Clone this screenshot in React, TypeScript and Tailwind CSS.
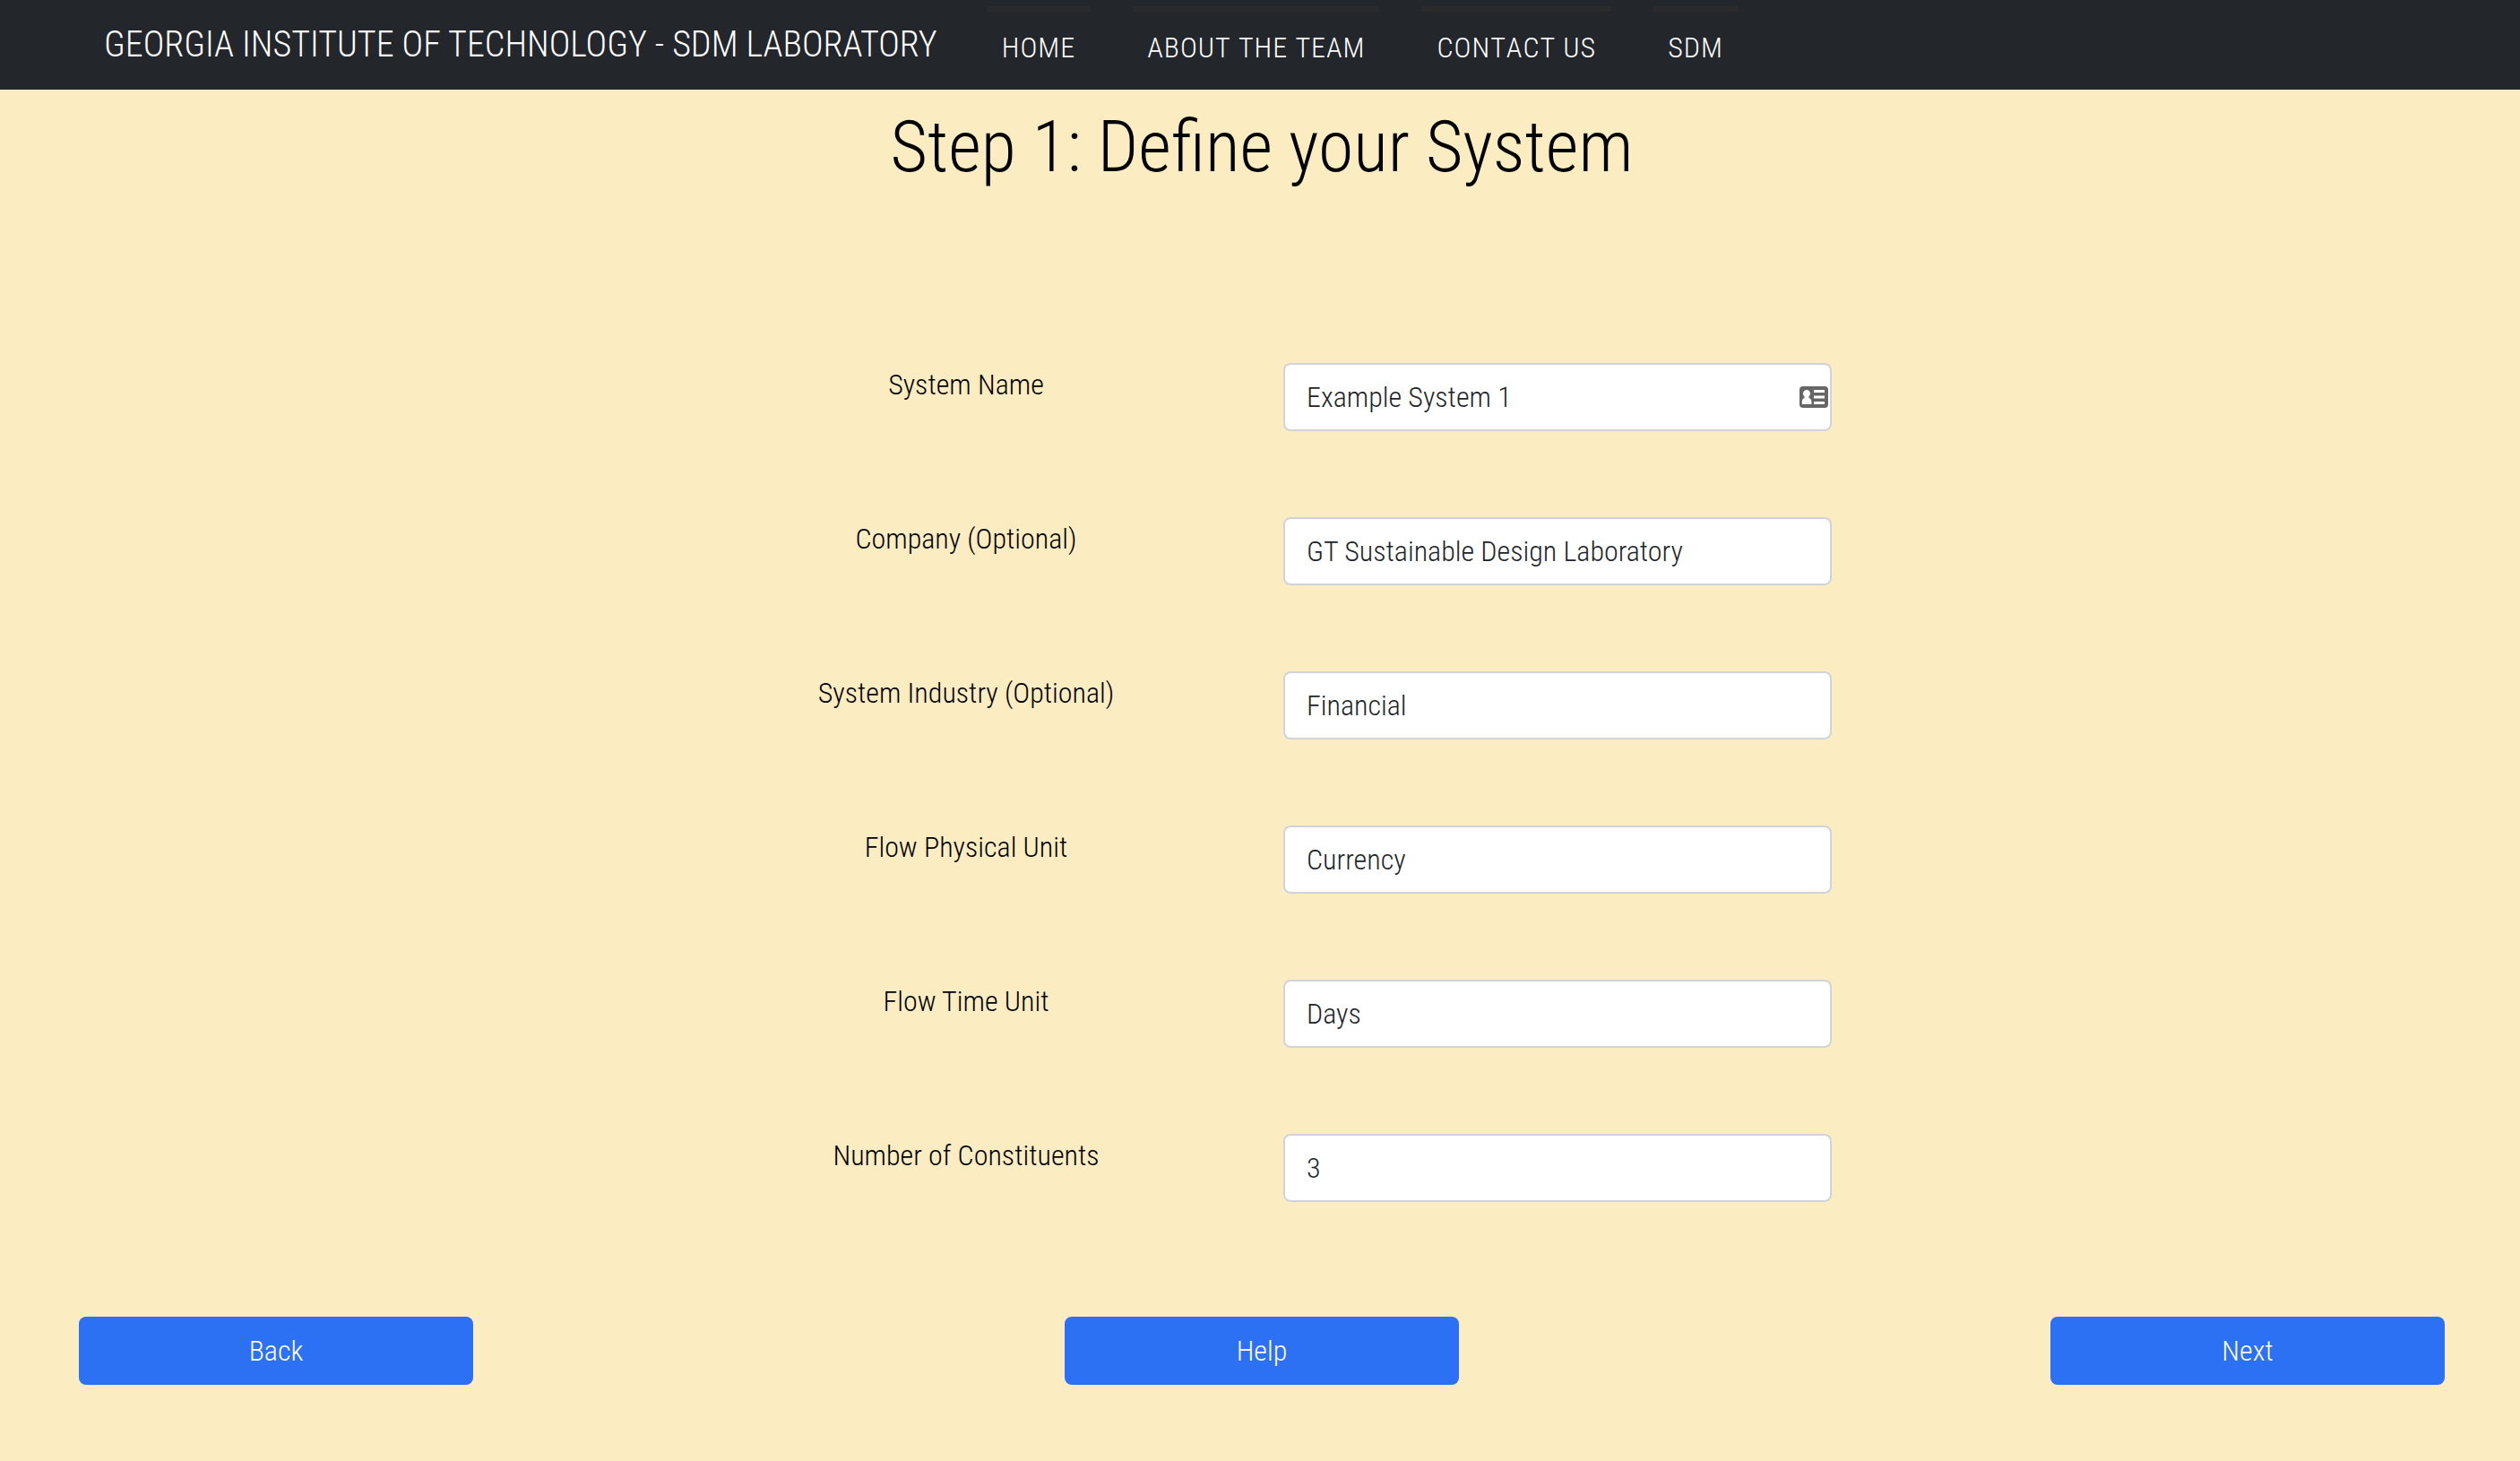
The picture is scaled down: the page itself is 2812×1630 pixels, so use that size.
const links = ["HOME", "ABOUT THE TEAM", "CONTACT US", "SDM"];

const fields = [
  { id: "system-name", label: "System Name", value: "Example System 1", autofill: true },
  { id: "company", label: "Company (Optional)", value: "GT Sustainable Design Laboratory" },
  { id: "industry", label: "System Industry (Optional)", value: "Financial" },
  { id: "physical-unit", label: "Flow Physical Unit", value: "Currency" },
  { id: "time-unit", label: "Flow Time Unit", value: "Days" },
  { id: "constituents", label: "Number of Constituents", value: "3" },
];

function ContactCardIcon() {
  return (
    <svg viewBox="0 0 32 24" className="h-6 w-8" aria-hidden="true">
      <rect width="32" height="24" rx="4" fill="#666666" />
      <path
        fill="#ffffff"
        d="M8 4C10.3 4 12 5.7 12 8C12 9.4 11.4 10.6 10.4 11.6V13C12.2 13.6 13.4 15 13.4 17V20H2.8V17C2.8 15 3.9 13.6 5.6 13V11.6C4.6 10.6 4 9.4 4 8C4 5.7 5.7 4 8 4Z"
      />
      <path fill="#ffffff" d="M16 4H28V7H16ZM16 10.5H28V13.5H16ZM16 17H28V20H16Z" />
    </svg>
  );
}

function Navbar() {
  return (
    <header className="bg-[#23262b] text-white">
      <nav className="flex min-h-[100px] flex-wrap items-center pl-[116px]">
        <a href="#top" className="mr-14 text-[40px] leading-[60px]">
          GEORGIA INSTITUTE OF TECHNOLOGY - SDM LABORATORY
        </a>
        <ul className="flex flex-wrap gap-12">
          {links.map((link) => (
            <li key={link}>
              <a
                href="#top"
                className="block border-t-[6px] border-[#2b2b2b] p-4 leading-[48px] tracking-[1px] [font-kerning:none]"
              >
                {link}
              </a>
            </li>
          ))}
        </ul>
      </nav>
    </header>
  );
}

function WizardButton({ children }: { children: string }) {
  return (
    <button type="button" className="h-[76px] w-1/6 rounded-lg bg-[#2c70f3] text-white">
      {children}
    </button>
  );
}

export default function App() {
  return (
    <div
      id="top"
      className="min-h-screen bg-[#fcecc2] font-['Roboto_Condensed','Roboto',sans-serif] text-[32px] leading-[48px] font-light text-black"
    >
      <Navbar />
      <main className="pt-4 pl-1">
        <h1 className="text-center text-[80px] leading-[96px]">Step 1: Define your System</h1>
        <form className="mx-auto mt-[193px] max-w-[2640px]">
          <div className="mx-auto flex w-1/2 flex-col gap-24">
            {fields.map((field) => (
              <div key={field.id} className="grid grid-cols-2">
                <label htmlFor={field.id} className="text-center">
                  {field.label}
                </label>
                <div className="relative mx-6">
                  <input
                    id={field.id}
                    type="text"
                    defaultValue={field.value}
                    className="block h-[76px] w-full rounded-lg border-2 border-[#ced4da] bg-white px-6 text-[#212529]"
                  />
                  {field.autofill && (
                    <span className="absolute inset-y-0 right-1 flex items-center">
                      <ContactCardIcon />
                    </span>
                  )}
                </div>
              </div>
            ))}
          </div>
          <div className="mt-32 flex justify-between">
            <WizardButton>Back</WizardButton>
            <WizardButton>Help</WizardButton>
            <WizardButton>Next</WizardButton>
          </div>
        </form>
      </main>
    </div>
  );
}
